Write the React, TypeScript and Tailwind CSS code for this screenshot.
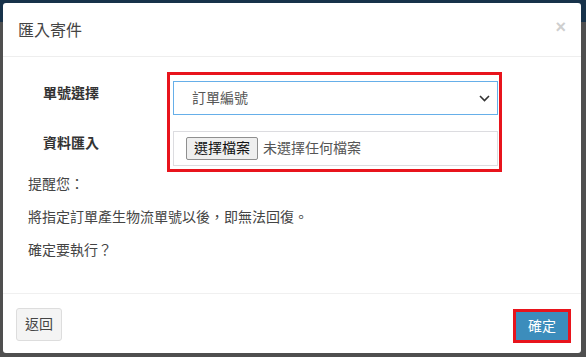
import React from "react";

const font = { fontFamily: '"Liberation Sans", "Noto Sans CJK TC", sans-serif' };

const notes = [
  "提醒您：",
  "將指定訂單產生物流單號以後，即無法回復。",
  "確定要執行？",
];

const ImportModal = () => {
  return (
    <div className="w-[578px] h-[350px] bg-white rounded-[3px] flex flex-col text-[#333]">
      {/* header */}
      <div className="h-[54px] shrink-0 border-b border-[#eee] flex items-center justify-between pl-[15px] pr-[15px]">
        <p className="text-[16px] text-[#444] mt-[2px]">匯入寄件</p>
        <span className="text-[18px] font-bold leading-none text-[#cfcfcf] mt-[-5px]">×</span>
      </div>

      {/* body */}
      <div className="flex-1 pt-[15px]">
        <div className="flex">
          <div className="w-[164px] pl-[40px] flex flex-col gap-[30px] pt-[11px] text-[14px] font-bold leading-[20px] text-[#333]">
            <p>單號選擇</p>
            <p>資料匯入</p>
          </div>
          <div className="w-[335px] border-[3px] border-[#e8141c] pl-[3px] pr-[1px] pt-[6px] pb-[3px] flex flex-col gap-[16px]">
            <div className="h-[34px] border border-[#66afe9] flex items-center justify-between pl-[18px] pr-[7px] text-[14px] text-[#555]">
              <span>訂單編號</span>
              <svg width="11" height="7" viewBox="0 0 11 7" fill="none">
                <path d="M1 1l4.5 4.5L10 1" stroke="#333" strokeWidth="1.6" />
              </svg>
            </div>
            <div className="h-[35px] border border-[#dcdce0] flex items-center pl-[12px] gap-[5px] text-[14px]">
              <span className="h-[23px] px-[7px] flex items-center bg-[#efefef] border border-[#8f8f8f] rounded-[2px] text-[#111]">
                選擇檔案
              </span>
              <span className="text-[#555]">未選擇任何檔案</span>
            </div>
          </div>
        </div>

        <div className="pl-[25px] mt-[2px] text-[14px] leading-[20px] text-[#444] flex flex-col gap-[13px]">
          {React.Children.toArray(notes.map((t) => <p>{t}</p>))}
        </div>
      </div>

      {/* footer */}
      <div className="h-[60px] shrink-0 border-t border-[#f0f0f0] flex items-start justify-between pl-[13px] pr-[10px] pt-[14px]">
        <button className="h-[33px] w-[46px] bg-[#f4f4f4] border border-[#ddd] rounded-[3px] text-[14px] text-[#444]">
          返回
        </button>
        <div className="mt-[1px] border-[3px] border-[#e8141c]">
          <button className="h-[28px] w-[52px] bg-[#3c8dbc] text-white text-[14px] flex items-center justify-center">
            確定
          </button>
        </div>
      </div>
    </div>
  );
};

const App = () => {
  return (
    <div
      className="w-[586px] h-[357px] overflow-hidden pl-[3px] pt-[3px] bg-[linear-gradient(#17324a_0_22px,#4f4f4f_22px)]"
      style={font}
    >
      <ImportModal />
    </div>
  );
};

export default App;
